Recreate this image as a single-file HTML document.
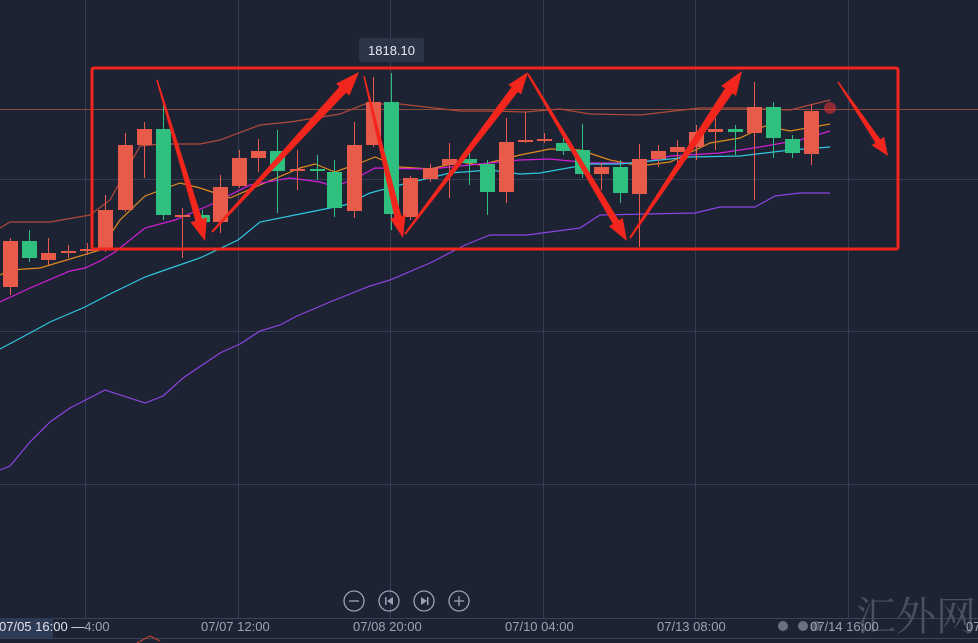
<!DOCTYPE html>
<html><head><meta charset="utf-8"><style>
html,body{margin:0;padding:0;background:#1e2334;width:978px;height:643px;overflow:hidden;font-family:"Liberation Sans","Noto Sans CJK SC",sans-serif}
#c{position:absolute;left:0;top:0}
.lbl{position:absolute;top:619px;font-size:13px;color:#9aa3b4;white-space:nowrap}
</style></head><body>
<svg id="c" width="978" height="643" xmlns="http://www.w3.org/2000/svg">
<rect width="978" height="643" fill="#1e2334"/>
<g id="grid" stroke="#353d55" stroke-width="1"></g>
<line x1="0" y1="109.5" x2="978" y2="109.5" stroke="#8a4a3c" stroke-width="1"/>
<g id="lines" fill="none" stroke-width="1.2"></g>
<g id="candles"></g>
<rect x="92" y="68" width="806" height="181" fill="none" stroke="#f2261c" stroke-width="3" rx="2"/>
<g id="arrows" fill="#f2261c"></g>
<rect x="359" y="38" width="65" height="24" rx="2" fill="#2c3448"/>
<text x="391.5" y="55" fill="#e6e9ef" font-size="13" text-anchor="middle" font-family="Liberation Sans, sans-serif">1818.10</text>
<line x1="0" y1="618.5" x2="978" y2="618.5" stroke="#3a4258"/>
<line x1="0" y1="638.5" x2="978" y2="638.5" stroke="#3a4258"/>
<g fill="none" stroke="#9aa3b4" stroke-width="1.3">
<circle cx="354" cy="601" r="10"/><circle cx="389" cy="601" r="10"/><circle cx="424" cy="601" r="10"/><circle cx="459" cy="601" r="10"/>
<line x1="349" y1="601" x2="359" y2="601"/>
<line x1="454" y1="601" x2="464" y2="601"/><line x1="459" y1="596" x2="459" y2="606"/>
</g>
<g fill="#9aa3b4"><rect x="385" y="597" width="1.5" height="8"/><polygon points="393,597 393,605 387,601"/>
<rect x="427" y="597" width="1.5" height="8"/><polygon points="421,597 421,605 427,601"/></g>
<rect x="0" y="618" width="53" height="20" fill="#2d3a55"/>
<circle cx="783" cy="626" r="5" fill="#6a7080"/><circle cx="803" cy="626" r="5" fill="#6a7080"/><circle cx="816" cy="626" r="5" fill="#4a5060"/>
<polyline points="137,643 150,636 160,641" fill="none" stroke="#c04030" stroke-width="1.2"/>
<text x="856" y="630" fill="#4a505f" font-size="40" font-family="Noto Serif CJK SC, serif">汇外网</text>
</svg>
<div class="lbl" style="left:-1px;color:#dfe3ea">07/05 16:00 <span style="color:#dfe3ea">—</span><span style="color:#9aa3b4">4:00</span></div>
<div class="lbl" style="left:201px">07/07 12:00</div>
<div class="lbl" style="left:353px">07/08 20:00</div>
<div class="lbl" style="left:505px">07/10 04:00</div>
<div class="lbl" style="left:657px">07/13 08:00</div>
<div class="lbl" style="left:810px">07/14 16:00</div>
<div class="lbl" style="left:966px">07</div>
<script>
const NS="http://www.w3.org/2000/svg";
function el(p,t,a){const e=document.createElementNS(NS,t);for(const k in a)e.setAttribute(k,a[k]);p.appendChild(e);return e;}
const g=document.getElementById('grid');
[85,238,390,543,695,848].forEach(x=>el(g,'line',{x1:x+.5,y1:0,x2:x+.5,y2:618}));
[179,331,484].forEach(y=>el(g,'line',{x1:0,y1:y+.5,x2:978,y2:y+.5}));
const L=document.getElementById('lines');
function pl(c,pts){el(L,'polyline',{points:pts.map(p=>p.join(',')).join(' '),stroke:c});}
pl('#b04a3a',[[0,228],[10,222],[50,222],[90,215],[110,200],[140,146],[160,144],[200,144],[220,140],[260,125],[290,122],[340,114],[365,104],[400,104],[460,111],[490,111],[525,112],[560,109],[590,114],[640,115],[700,108],[740,108],[790,110],[830,100]]);
pl('#e08a1e',[[0,275],[10,270],[40,268],[60,262],[100,250],[120,220],[145,196],[180,183],[200,188],[230,198],[260,185],[300,168],[315,164],[335,172],[360,163],[375,157],[400,167],[430,169],[460,162],[480,165],[520,155],[550,149],[580,150],[610,160],[640,166],[670,162],[710,143],[740,138],[765,126],[790,131],[830,124]]);
pl('#d21ed8',[[0,302],[30,288],[70,271],[85,268],[100,261],[115,252],[145,228],[175,220],[210,205],[250,185],[290,178],[320,182],[335,187],[360,176],[375,168],[430,169],[470,165],[520,160],[550,159],[590,163],[640,163],[670,156],[720,153],[760,147],[800,140],[830,131]]);
pl('#2ec8e0',[[0,349],[30,333],[50,322],[85,307],[110,294],[145,277],[165,270],[200,258],[238,240],[260,222],[300,214],[345,205],[370,193],[400,185],[450,173],[490,170],[520,174],[540,173],[590,164],[620,164],[690,157],[740,156],[790,150],[830,147]]);
pl('#8a44e0',[[0,470],[10,466],[30,442],[50,422],[70,408],[105,390],[145,403],[163,396],[183,378],[220,353],[240,344],[260,331],[280,325],[297,316],[330,302],[370,286],[390,280],[430,263],[465,245],[490,235],[527,235],[580,228],[600,215],[695,213],[720,207],[755,207],[775,196],[800,193],[830,193]]);
const C=document.getElementById('candles');
const R='#e85a4a',G='#2fbf7f';
const cs=[[3,241,287,238,295,R],[22,241,258,230,262,G],[41,253,260,238,265,R],[61,251,253,245,258,R],[80,249,251,243,255,R],
[98,210,250,195,252,R],[118,145,210,133,212,R],[137,129,145,122,178,R],[156,129,215,100,220,G],[175,215,217,208,258,R],
[195,215,222,210,225,G],[213,187,222,175,233,R],[232,158,186,150,188,R],[251,151,158,139,172,R],[270,151,171,130,213,G],
[290,169,171,150,190,R],[310,169,171,155,180,G],[327,172,208,160,217,G],[347,145,211,122,218,R],[366,102,145,77,147,R],
[384,102,214,73,230,G],[403,178,217,176,220,R],[423,168,179,164,182,R],[442,159,165,143,198,R],[462,159,163,150,185,G],
[480,164,192,160,215,G],[499,142,192,118,203,R],[518,140,142,112,143,R],[537,139,141,133,143,R],[556,143,151,138,155,G],
[575,150,174,124,178,G],[594,167,174,163,190,R],[613,167,193,160,203,G],[632,159,194,144,247,R],[651,151,159,145,167,R],
[670,147,152,140,170,R],[689,132,147,125,160,R],[708,129,132,118,150,R],[728,129,132,125,155,G],[747,107,133,82,200,R],
[766,107,138,102,158,G],[785,139,153,135,158,G],[804,111,154,104,165,R]];
cs.forEach(c=>{const w=15;el(C,'line',{x1:c[0]+w/2,x2:c[0]+w/2,y1:c[3],y2:c[4],stroke:c[5],'stroke-width':1});
el(C,'rect',{x:c[0],y:c[1],width:w,height:Math.max(2,c[2]-c[1]),fill:c[5]});});
el(C,'circle',{cx:830,cy:108,r:6,fill:'#ff3030',opacity:.5});
const A=document.getElementById('arrows');
function arrow(x1,y1,x2,y2,w0,w1,hl,hw){const dx=x2-x1,dy=y2-y1,len=Math.hypot(dx,dy),ux=dx/len,uy=dy/len,nx=-uy,ny=ux;
const bx=x2-ux*hl,by=y2-uy*hl;
const p=[[x1+nx*w0/2,y1+ny*w0/2],[bx+nx*w1/2,by+ny*w1/2],[bx+nx*hw/2,by+ny*hw/2],[x2,y2],[bx-nx*hw/2,by-ny*hw/2],[bx-nx*w1/2,by-ny*w1/2],[x1-nx*w0/2,y1-ny*w0/2]];
el(A,'polygon',{points:p.map(q=>q.map(v=>v.toFixed(1)).join(',')).join(' ')});}
arrow(157,80,205,241,1.5,7,22,17);
arrow(212,232,359,72,2,9,24,18);
arrow(364,76,403,238,1.5,7,22,16);
arrow(405,234,528,72,2,8,22,16);
arrow(528,74,627,241,2,7,22,16);
arrow(630,238,742,71,2,9,24,18);
arrow(838,82,888,156,1.5,6,18,15);
</script>
</body></html>
